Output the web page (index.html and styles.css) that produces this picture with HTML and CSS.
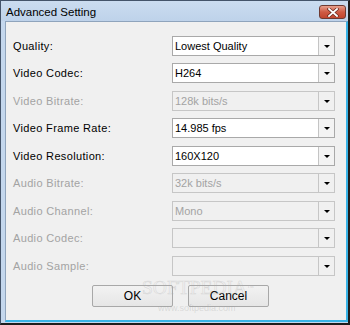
FILE: index.html
```html
<!DOCTYPE html>
<html lang="en">

<head>
    <meta charset="UTF-8" />
    <title>Advanced Setting</title>
    <link rel="stylesheet" href="styles.css">
</head>

<body>
    <div class="window">
        <div class="titlebar">
            <span class="title">Advanced Setting</span>
            <div class="close-btn">
                <svg width="12" height="9" viewBox="0 0 12 9">
                    <path d="M2 1 L10 8 M10 1 L2 8" stroke="#6b2a20" stroke-width="3.2" stroke-linecap="square" />
                    <path d="M2 1 L10 8 M10 1 L2 8" stroke="#fff" stroke-width="1.8" stroke-linecap="square" />
                </svg>
            </div>
        </div>

        <div class="client">
            <div class="settings">
                <label>Quality:</label>
                <div class="combo"><span class="value">Lowest Quality</span><span class="drop"></span></div>

                <label>Video Codec:</label>
                <div class="combo"><span class="value">H264</span><span class="drop"></span></div>

                <label class="disabled">Video Bitrate:</label>
                <div class="combo disabled"><span class="value">128k bits/s</span><span class="drop"></span></div>

                <label>Video Frame Rate:</label>
                <div class="combo"><span class="value">14.985 fps</span><span class="drop"></span></div>

                <label>Video Resolution:</label>
                <div class="combo"><span class="value">160X120</span><span class="drop"></span></div>

                <label class="disabled">Audio Bitrate:</label>
                <div class="combo disabled"><span class="value">32k bits/s</span><span class="drop"></span></div>

                <label class="disabled">Audio Channel:</label>
                <div class="combo disabled"><span class="value">Mono</span><span class="drop"></span></div>

                <label class="disabled">Audio Codec:</label>
                <div class="combo disabled"><span class="value"></span><span class="drop"></span></div>

                <label class="disabled">Audio Sample:</label>
                <div class="combo disabled"><span class="value"></span><span class="drop"></span></div>
            </div>

            <div class="buttons">
                <button>OK</button>
                <button>Cancel</button>
            </div>

            <div class="watermark">SOFTPEDIA<sup>™</sup></div>
            <div class="watermark-url">www.softpedia.com</div>
        </div>
    </div>
</body>

</html>
```

FILE: styles.css
```css
:root {
    --frame: #c4d7ed;
    --face: #f0f0f0;
    --text: #000;
    --dim-text: #a3a3a3;
    --edge: #a9a9a9;
    --edge-dim: #c6c6c6;
}

* {
    margin: 0;
    padding: 0;
    box-sizing: border-box;
}

body {
    width: 350px;
    height: 325px;
    overflow: hidden;
    font-family: 'Liberation Sans', Arial, sans-serif;
}

.window {
    width: 350px;
    height: 325px;
    background: var(--frame);
    border: 1px solid #44546a;
    border-right: 2px solid #1d1d1d;
    border-bottom: 2px solid #1d1d1d;
    display: flex;
    flex-direction: column;
}

.titlebar {
    height: 20px;
    flex: none;
    display: flex;
    align-items: center;
    justify-content: space-between;
    padding: 0 2px 0 5px;
    background: linear-gradient(#cbdcf0, #bed2ea);
}

.title {
    font-size: 11.5px;
    color: #000;
    padding-top: 1px;
}

.close-btn {
    width: 27px;
    height: 14px;
    margin-top: 2px;
    border: 1px solid #6e3a32;
    border-radius: 3px;
    background: linear-gradient(#e7a08f, #cf5a43 50%, #c1452e);
    display: flex;
    align-items: center;
    justify-content: center;
}

.client {
    flex: 1;
    position: relative;
    overflow: hidden;
    margin: 0 0 1px 4px;
    background: var(--face);
    border: 1px solid #8fa4bc;
    border-right: 2px solid #38b3e6;
    border-bottom: 2px solid #38b3e6;
    padding: 13.5px 11px 0 7px;
}

.settings {
    display: grid;
    grid-template-columns: 1fr 163px;
    grid-auto-rows: 20px;
    row-gap: 7.5px;
    align-items: center;
}

label {
    font-size: 11px;
    letter-spacing: 0.35px;
    color: var(--text);
}

label.disabled {
    color: var(--dim-text);
}

.combo {
    height: 20px;
    display: flex;
    background: #fff;
    border: 1px solid var(--edge);
}

.combo .value {
    flex: 1;
    font-size: 11px;
    line-height: 18px;
    padding-left: 2px;
    color: var(--text);
}

.combo .drop {
    width: 16px;
    border-left: 1px solid #c4c4c4;
    background: #f3f3f3;
    position: relative;
}

.combo .drop::after {
    content: "";
    position: absolute;
    left: 5px;
    top: 8px;
    border-left: 3px solid transparent;
    border-right: 3px solid transparent;
    border-top: 3px solid #000;
}

.combo.disabled {
    background: var(--face);
    border-color: var(--edge-dim);
}

.combo.disabled .value {
    color: var(--dim-text);
}

.combo.disabled .drop {
    border-left-color: var(--edge-dim);
    background: var(--face);
}

.buttons {
    display: flex;
    gap: 15px;
    margin-top: 9.5px;
    padding-left: 79px;
}

button {
    width: 81px;
    height: 22px;
    font-family: 'Liberation Sans', Arial, sans-serif;
    font-size: 12px;
    color: #000;
    background: linear-gradient(#f2f2f2, #e6e6e6);
    border: 1px solid #a8a8a8;
    border-radius: 2px;
}

.watermark {
    position: absolute;
    left: 136px;
    top: 256px;
    font-family: 'Liberation Serif', serif;
    font-size: 19.5px;
    line-height: 20px;
    color: transparent;
    -webkit-text-stroke: 0.6px rgba(170, 170, 170, 0.35);
    pointer-events: none;
}

.watermark sup {
    font-size: 7px;
    vertical-align: top;
    -webkit-text-stroke: 0;
    color: rgba(170, 170, 170, 0.4);
}

.watermark-url {
    position: absolute;
    left: 152px;
    top: 281px;
    font-size: 9px;
    line-height: 10px;
    color: rgba(160, 160, 160, 0.3);
    pointer-events: none;
}
```
